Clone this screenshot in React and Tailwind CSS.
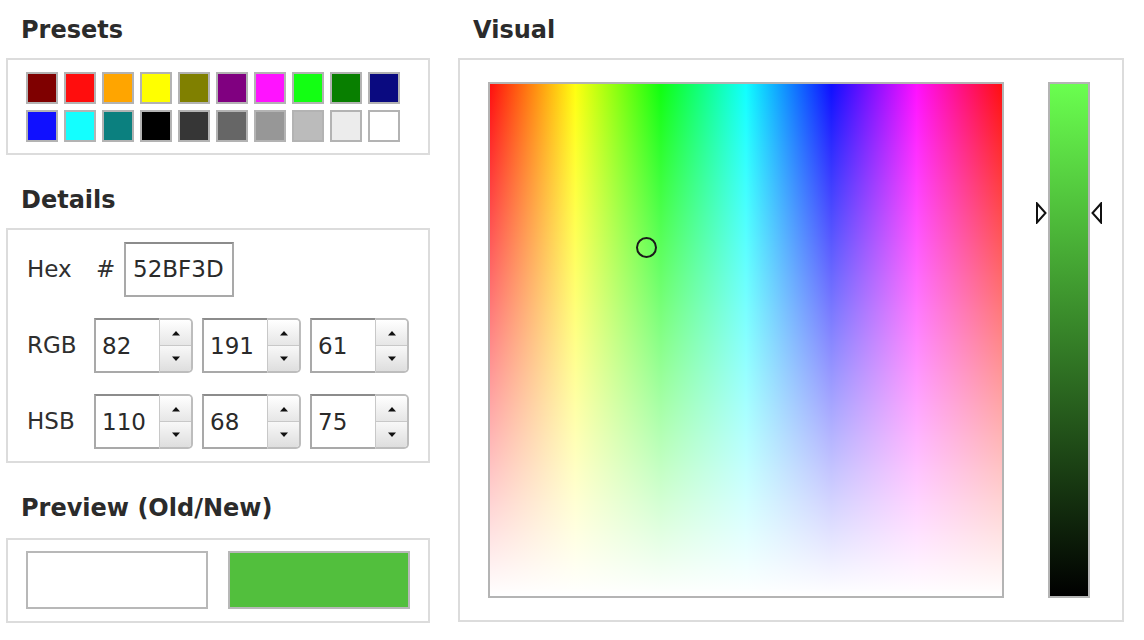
import React from "react";

const FONT = { fontFamily: '"DejaVu Sans", Verdana, sans-serif' };

const presets = [
  "#7f0000", "#ff0d0d", "#ffa500", "#ffff00", "#808000", "#800080", "#ff13ff", "#13ff13", "#087f00", "#0a0a80",
  "#1010ff", "#13ffff", "#0b807f", "#000000", "#363636", "#666666", "#979797", "#bbbbbb", "#ececec", "#ffffff",
];

function Heading({ children, className = "" }) {
  return (
    <div className={"pl-[15px] text-[24px] leading-[27px] font-bold text-[#2b2b2b] " + className}>
      {children}
    </div>
  );
}

function Spinner({ value }) {
  return (
    <div className="flex h-[55px] w-[99px]">
      <div className="flex h-full w-[65px] items-center border-2 border-r-0 border-[#a9a9a9] border-t-[#8c8c8c] bg-white pl-[6px] pt-[2px] text-[23px] text-[#2a2a2a]">
        {value}
      </div>
      <div className="flex h-full w-[34px] flex-col overflow-hidden rounded-r-[5px] border-2 border-l border-[#bdbdbd] border-l-[#c8c8c8]">
        <div className="flex flex-1 items-center justify-center border-b border-[#c8c8c8] bg-[linear-gradient(to_bottom,#ffffff,#e6e6e6)]">
          <svg width="10" height="6" viewBox="0 0 10 6">
            <path d="M1 5.5 L5 1 L9 5.5 Z" fill="#111" />
          </svg>
        </div>
        <div className="flex flex-1 items-center justify-center bg-[linear-gradient(to_bottom,#f8f8f8,#dedede)]">
          <svg width="10" height="6" viewBox="0 0 10 6">
            <path d="M1 0.5 L5 5 L9 0.5 Z" fill="#111" />
          </svg>
        </div>
      </div>
    </div>
  );
}

function Row({ label, values }) {
  return (
    <div className="flex items-center">
      <div className="w-[67px] text-[23px] text-[#2f2f2f]">{label}</div>
      <div className="flex gap-[9px]">
        {values.map((v, i) => (
          <Spinner key={i} value={v} />
        ))}
      </div>
    </div>
  );
}

export default function App() {
  return (
    <div className="flex h-[640px] w-[1144px] gap-[28px] bg-white pl-[6px] pt-[17px]" style={FONT}>
      {/* Left column */}
      <div className="flex w-[424px] flex-col">
        <Heading className="mb-[14px]">Presets</Heading>
        <div className="border-2 border-[#dcdcdc] pb-[11px] pl-[18px] pt-[12px]">
          <div className="grid w-[374px] grid-cols-10 gap-[6px]">
            {presets.map((c, i) => (
              <div
                key={i}
                className="h-[32px] w-[32px] border-2 border-[#b3b3b3]"
                style={{ backgroundColor: c }}
              />
            ))}
          </div>
        </div>

        <Heading className="mb-[14px] mt-[32px]">Details</Heading>
        <div className="flex flex-col gap-[21px] border-2 border-[#dcdcdc] pb-[12px] pl-[19px] pt-[12px]">
          <div className="flex items-center">
            <div className="w-[69px] text-[23px] text-[#2f2f2f]">Hex</div>
            <div className="w-[28px] text-[23px] text-[#2f2f2f]">#</div>
            <div className="flex h-[55px] w-[110px] items-center border-2 border-[#a9a9a9] border-t-[#8c8c8c] pl-[7px] text-[23px] text-[#2a2a2a]">
              52BF3D
            </div>
          </div>
          <Row label="RGB" values={["82", "191", "61"]} />
          <Row label="HSB" values={["110", "68", "75"]} />
        </div>

        <Heading className="mb-[16px] mt-[32px]">Preview (Old/New)</Heading>
        <div className="flex gap-[20px] border-2 border-[#dcdcdc] pb-[12px] pl-[18px] pt-[11px]">
          <div className="h-[58px] w-[182px] border-2 border-[#b8b8b8] bg-white" />
          <div className="h-[58px] w-[182px] border-2 border-[#b8b8b8] bg-[#52bf3d]" />
        </div>
      </div>

      {/* Right column */}
      <div className="flex w-[666px] flex-col">
        <Heading className="mb-[14px]">Visual</Heading>
        <div className="flex h-[564px] gap-[44px] border-2 border-[#dcdcdc] pl-[28px] pt-[22px]">
          <div className="relative h-[516px] w-[516px] border-2 border-[#b4b4b4] bg-[linear-gradient(to_right,#ff0000,#ffff00,#00ff00,#00ffff,#0000ff,#ff00ff,#ff0000)]">
            <div className="absolute inset-0 bg-[linear-gradient(to_bottom,rgba(255,255,255,0.06),rgba(255,255,255,1))]" />
            <div className="absolute left-[146px] top-[153px] h-[21px] w-[21px] rounded-full border-2 border-[#1a1a1a]" />
          </div>
          <div className="relative h-[516px] w-[42px] border-2 border-[#b4b4b4] bg-[linear-gradient(to_bottom,#6aff4f,#000000)]">
            <svg className="absolute left-[-15px] top-[118px]" width="12" height="22" viewBox="0 0 12 22">
              <path d="M2 1.5 L10.5 11 L2 20.5 Z" fill="white" stroke="#111" strokeWidth="2" strokeLinejoin="miter" />
            </svg>
            <svg className="absolute right-[-15px] top-[118px]" width="12" height="22" viewBox="0 0 12 22">
              <path d="M10 1.5 L1.5 11 L10 20.5 Z" fill="white" stroke="#111" strokeWidth="2" strokeLinejoin="miter" />
            </svg>
          </div>
        </div>
      </div>
    </div>
  );
}
